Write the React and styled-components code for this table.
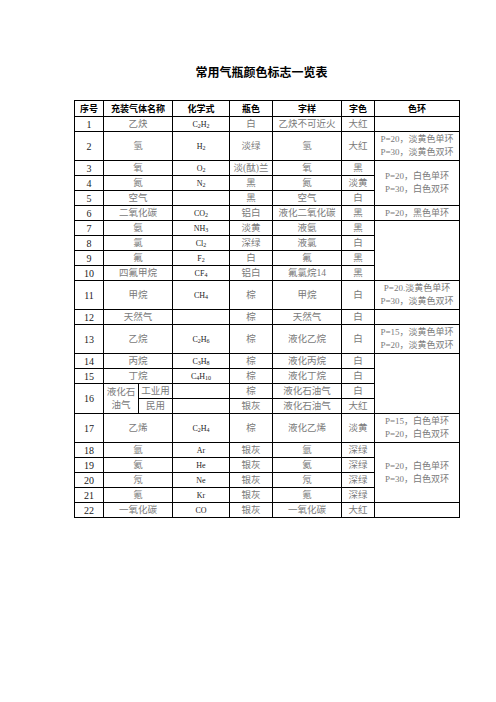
import React from 'react';
import styled, { createGlobalStyle } from 'styled-components';

const GlobalStyle = createGlobalStyle`
  html, body { margin: 0; padding: 0; background: #fff; }
`;

const Page = styled.div`
  padding: 64px 0 0 74px;
  font-family: "Liberation Serif", "Noto Sans CJK SC", serif;
`;

const Title = styled.h1`
  margin: 0 0 20px;
  width: 375px;
  text-align: center;
  font-family: "Noto Sans CJK SC", sans-serif;
  font-weight: 700;
  font-size: 12px;
  line-height: 16px;
  color: #000;
`;

const Table = styled.table`
  border-collapse: collapse;
  table-layout: fixed;
  width: 385px;
`;

const Row = styled.tr`
  height: ${(p) => p.$h}px;
`;

const Th = styled.th`
  border: 1px solid #000;
  padding: 0;
  font-family: "Noto Sans CJK SC", sans-serif;
  font-weight: 700;
  font-size: 9px;
  line-height: 1;
  color: #000;
  text-align: center;
  vertical-align: middle;
`;

const Td = styled.td`
  border: 1px solid #000;
  padding: 0;
  text-align: center;
  vertical-align: middle;
  font-size: 9.5px;
  line-height: 13px;
  color: #7a7a7a;
  white-space: nowrap;
  overflow: hidden;
`;

const NumCell = styled(Td)`
  color: #222;
  font-size: 10px;
`;

const FormulaCell = styled(Td)`
  color: #222;
  font-size: 8px;
  sub {
    font-size: 6px;
    vertical-align: -1px;
    line-height: 0;
  }
`;

const RingCell = styled(Td)`
  font-size: 9px;
  line-height: 13px;
`;

const Formula = ({ f }) => {
  if (!f) return null;
  const parts = f.split(/(\d+)/).filter(Boolean);
  return (
    <>
      {parts.map((p, i) => (/^\d+$/.test(p) ? <sub key={i}>{p}</sub> : <span key={i}>{p}</span>))}
    </>
  );
};

const RingText = ({ lines }) => (
  <>
    {lines.map((l, i) => (
      <div key={i}>{l}</div>
    ))}
  </>
);

const W = ['P=20，白色单环', 'P=30，白色双环'];

const rows = [
  { n: '1', name: '乙炔', f: 'C2H2', b: '白', l: '乙炔不可近火', c: '大红', ring: { span: 1, lines: [] } },
  { n: '2', name: '氢', f: 'H2', b: '淡绿', l: '氢', c: '大红', tall: true, ring: { span: 1, lines: ['P=20，淡黄色单环', 'P=30，淡黄色双环'] } },
  { n: '3', name: '氧', f: 'O2', b: '淡(酞)兰', l: '氧', c: '黑', ring: { span: 3, lines: W } },
  { n: '4', name: '氮', f: 'N2', b: '黑', l: '氮', c: '淡黄' },
  { n: '5', name: '空气', f: '', b: '黑', l: '空气', c: '白' },
  { n: '6', name: '二氧化碳', f: 'CO2', b: '铝白', l: '液化二氧化碳', c: '黑', ring: { span: 1, lines: ['P=20，黑色单环'] } },
  { n: '7', name: '氨', f: 'NH3', b: '淡黄', l: '液氨', c: '黑', ring: { span: 4, lines: [] } },
  { n: '8', name: '氯', f: 'Cl2', b: '深绿', l: '液氯', c: '白' },
  { n: '9', name: '氟', f: 'F2', b: '白', l: '氟', c: '黑' },
  { n: '10', name: '四氟甲烷', f: 'CF4', b: '铝白', l: '氟氯烷14', c: '黑' },
  { n: '11', name: '甲烷', f: 'CH4', b: '棕', l: '甲烷', c: '白', tall: true, ring: { span: 1, lines: ['P=20.淡黄色单环', 'P=30，淡黄色双环'] } },
  { n: '12', name: '天然气', f: '', b: '棕', l: '天然气', c: '白', ring: { span: 1, lines: [] } },
  { n: '13', name: '乙烷', f: 'C2H6', b: '棕', l: '液化乙烷', c: '白', tall: true, ring: { span: 1, lines: ['P=15，淡黄色单环', 'P=20，淡黄色双环'] } },
  { n: '14', name: '丙烷', f: 'C3H8', b: '棕', l: '液化丙烷', c: '白', ring: { span: 4, lines: [] } },
  { n: '15', name: '丁烷', f: 'C4H10', b: '棕', l: '液化丁烷', c: '白' },
  { lpg: true },
  { n: '17', name: '乙烯', f: 'C2H4', b: '棕', l: '液化乙烯', c: '淡黄', tall: true, ring: { span: 1, lines: ['P=15，白色单环', 'P=20，白色双环'] } },
  { n: '18', name: '氩', f: 'Ar', b: '银灰', l: '氩', c: '深绿', ring: { span: 4, lines: W } },
  { n: '19', name: '氦', f: 'He', b: '银灰', l: '氦', c: '深绿' },
  { n: '20', name: '氖', f: 'Ne', b: '银灰', l: '氖', c: '深绿' },
  { n: '21', name: '氪', f: 'Kr', b: '银灰', l: '氪', c: '深绿' },
  { n: '22', name: '一氧化碳', f: 'CO', b: '银灰', l: '一氧化碳', c: '大红', ring: { span: 1, lines: [] } },
];

const SINGLE = 15;
const TALL = 29;

export default function App() {
  return (
    <>
      <GlobalStyle />
      <Page>
        <Title>常用气瓶颜色标志一览表</Title>
        <Table>
          <colgroup>
            <col style={{ width: 29 }} />
            <col style={{ width: 35 }} />
            <col style={{ width: 34 }} />
            <col style={{ width: 57 }} />
            <col style={{ width: 43 }} />
            <col style={{ width: 69 }} />
            <col style={{ width: 33 }} />
            <col style={{ width: 85 }} />
          </colgroup>
          <thead>
            <Row $h={16}>
              <Th>序号</Th>
              <Th colSpan={2}>充装气体名称</Th>
              <Th>化学式</Th>
              <Th>瓶色</Th>
              <Th>字样</Th>
              <Th>字色</Th>
              <Th>色环</Th>
            </Row>
          </thead>
          <tbody>
            {rows.map((r, i) =>
              r.lpg ? (
                <React.Fragment key={i}>
                  <Row $h={SINGLE}>
                    <NumCell rowSpan={2}>16</NumCell>
                    <Td rowSpan={2}>
                      液化石
                      <br />
                      油气
                    </Td>
                    <Td>工业用</Td>
                    <FormulaCell />
                    <Td>棕</Td>
                    <Td>液化石油气</Td>
                    <Td>白</Td>
                  </Row>
                  <Row $h={SINGLE}>
                    <Td>民用</Td>
                    <FormulaCell />
                    <Td>银灰</Td>
                    <Td>液化石油气</Td>
                    <Td>大红</Td>
                  </Row>
                </React.Fragment>
              ) : (
                <Row key={i} $h={r.tall ? TALL : SINGLE}>
                  <NumCell>{r.n}</NumCell>
                  <Td colSpan={2}>{r.name}</Td>
                  <FormulaCell>
                    <Formula f={r.f} />
                  </FormulaCell>
                  <Td>{r.b}</Td>
                  <Td>{r.l}</Td>
                  <Td>{r.c}</Td>
                  {r.ring && (
                    <RingCell rowSpan={r.ring.span}>
                      <RingText lines={r.ring.lines} />
                    </RingCell>
                  )}
                </Row>
              )
            )}
          </tbody>
        </Table>
      </Page>
    </>
  );
}
